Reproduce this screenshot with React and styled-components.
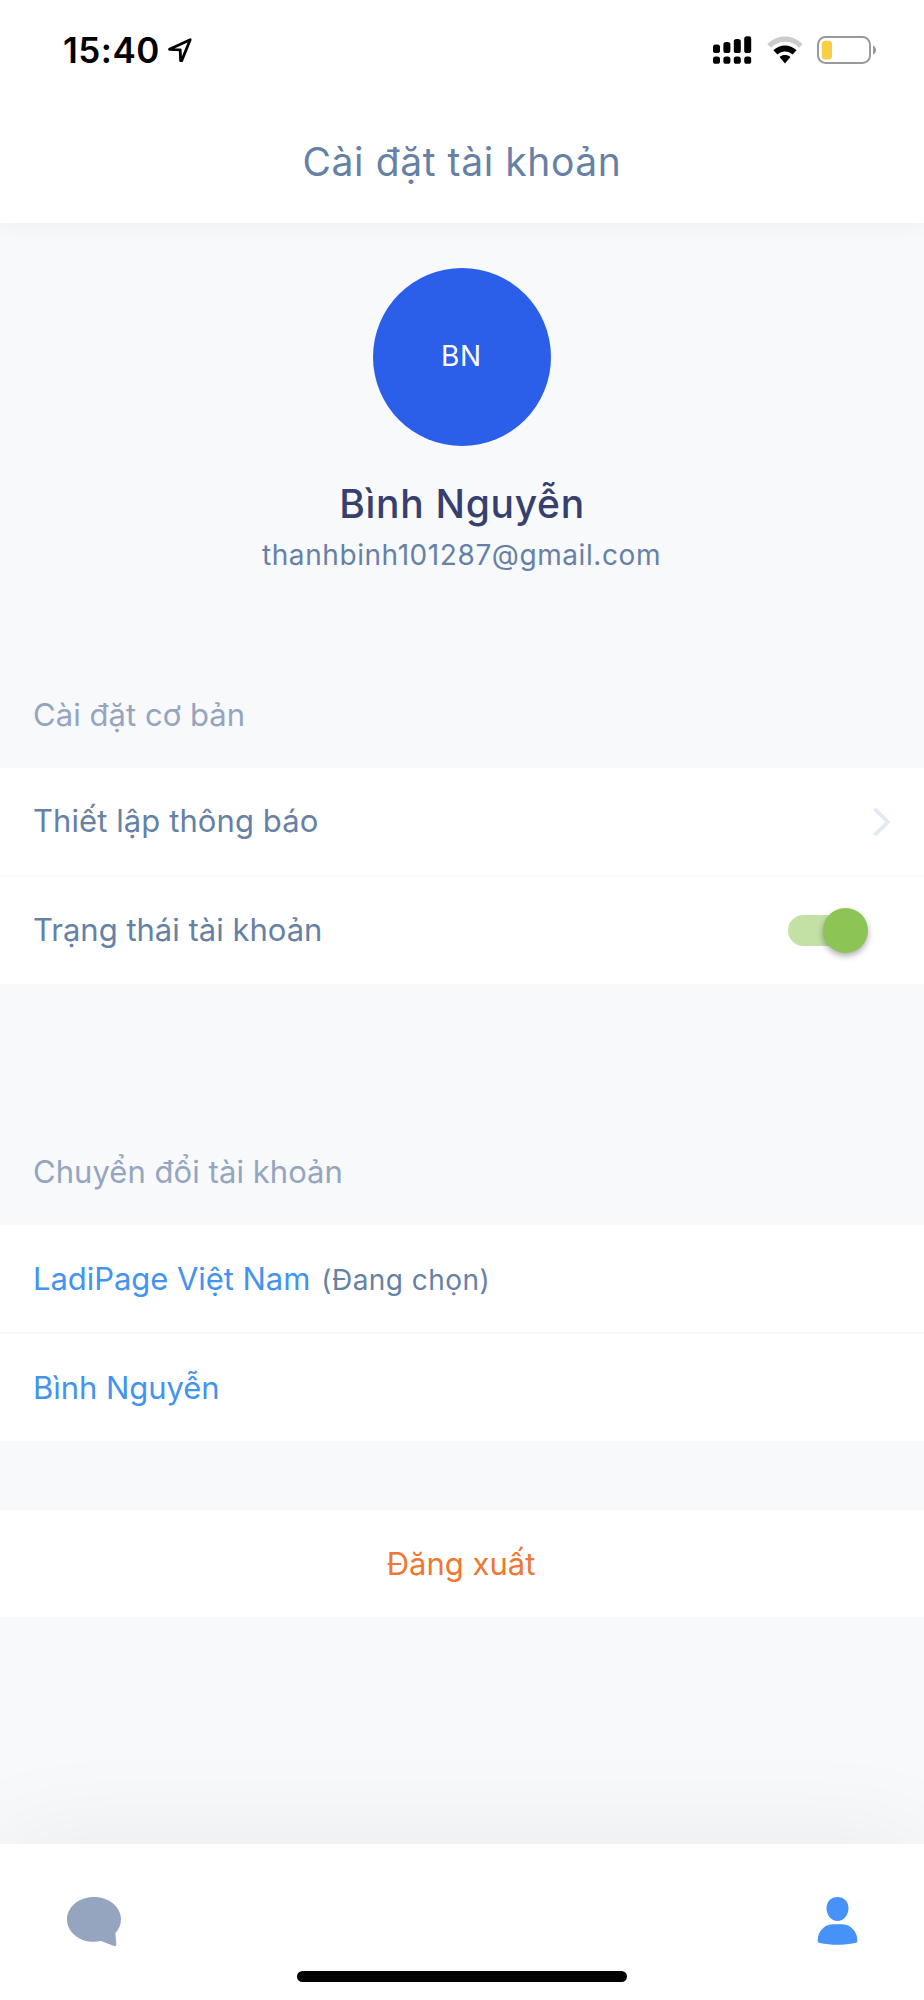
import React, { useState } from "react";

import styled, { createGlobalStyle } from "styled-components";

const GlobalStyle = createGlobalStyle`
  :root {
    --slate:#6681a5;
    --muted:#95a5bf;
    --navy:#363f6e;
    --blue:#4493ee;
    --orange:#ee7733;
    --background:#f8f9fb;
  }

  * {
    box-sizing:border-box;
  }

  body {
    margin:0;
    background:var(--background);
    font-family:Inter, "Noto Sans", sans-serif;
    font-size:31px;
  }

  h1, h2, p {
    margin:0;
    font-weight:400;
  }

  svg {
    display:block;
  }
`

const ScreenStyles = styled.div`
  width:924px;
  height:2000px;
  display:flex;
  flex-direction:column;
  overflow:hidden;
  background:var(--background);
`

const HeaderStyles = styled.header`
  flex:none;
  height:223px;
  background:#fff;
  box-shadow:0 0 22px rgba(0, 0, 0, 0.06);
`

const StatusBar = styled.div`
  height:100px;
  padding:0 47px 0 63px;
  display:flex;
  align-items:center;
  justify-content:space-between;
  color:#000;
`

const StatusGroup = styled.div`
  display:flex;
  align-items:center;
`

const Clock = styled.span`
  width:104px;
  font-size:35px;
  font-weight:600;
  letter-spacing:0.5px;
`

const SignalIcon = styled.svg`
  margin-right:15px;
`

const WifiIcon = styled.svg`
  margin-right:14px;
`

const Title = styled.h1`
  height:123px;
  line-height:123px;
  text-align:center;
  font-size:39px;
  letter-spacing:0.6px;
  color:var(--slate);
`

const Profile = styled.section`
  padding-top:45px;
  display:flex;
  flex-direction:column;
  align-items:center;
`

const Avatar = styled.div`
  width:178px;
  height:178px;
  padding:0 1px 3px 0;
  display:flex;
  align-items:center;
  justify-content:center;
  border-radius:50%;
  background:#2b5fe9;
  color:#fff;
  font-size:28px;
  letter-spacing:0.7px;
`

const Name = styled.h2`
  margin-top:33px;
  line-height:50px;
  font-size:39px;
  font-weight:500;
  letter-spacing:0.7px;
  color:var(--navy);
`

const Email = styled.p`
  margin-top:8px;
  padding-right:1px;
  line-height:36px;
  font-size:28px;
  letter-spacing:0.58px;
  color:var(--slate);
`

const SectionLabel = styled.h2`
  margin-top:${({ $gap }) => $gap}px;
  padding:0 33px 33px;
  line-height:40px;
  font-size:31px;
  letter-spacing:0.05px;
  color:var(--muted);
`

const List = styled.div`
  display:flex;
  flex-direction:column;
  gap:2px;
`

const Row = styled.div`
  height:107px;
  padding:0 ${({ $right }) => $right || 33}px 0 33px;
  display:flex;
  align-items:center;
  justify-content:space-between;
  background:#fff;
  color:var(--slate);
`

const RowText = styled.span`
  padding-bottom:2px;
  letter-spacing:${({ $spacing }) => $spacing || 0}px;
`

const AccountRow = styled(Row)`
  justify-content:flex-start;
  align-items:baseline;
  line-height:107px;
  letter-spacing:-0.05px;
  color:var(--blue);
`

const Selected = styled.span`
  margin-left:11px;
  font-size:28px;
  letter-spacing:0.45px;
  color:var(--slate);
`

const Switch = styled.button`
  width:80px;
  height:45px;
  padding:0;
  display:flex;
  align-items:center;
  border:none;
  background:none;
`

const Track = styled.span`
  flex:none;
  width:72px;
  height:31px;
  border-radius:16px;
  background:${({ $on }) => ($on ? "#c3e1a5" : "#ccc")};
`

const Thumb = styled.span`
  flex:none;
  width:45px;
  height:45px;
  margin-left:${({ $on }) => ($on ? -37 : -80)}px;
  border-radius:50%;
  background:${({ $on }) => ($on ? "#8cc555" : "#fafafa")};
  box-shadow:0 3px 6px rgba(0, 0, 0, 0.32);
`

const Logout = styled.button`
  height:107px;
  margin-top:69px;
  padding:0 2px 1px 0;
  border:none;
  background:#fff;
  font:inherit;
  color:var(--orange);
`

const TabBar = styled.nav`
  flex:none;
  height:156px;
  margin-top:auto;
  padding-top:53px;
  display:flex;
  flex-direction:column;
  justify-content:space-between;
  background:#fff;
  box-shadow:0 0 110px rgba(0, 0, 0, 0.065);
`

const Tabs = styled.div`
  padding:0 66px 0 67px;
  display:flex;
  justify-content:space-between;
`

const HomeIndicator = styled.div`
  width:330px;
  height:11px;
  margin:0 auto 18px;
  border-radius:6px;
  background:#000;
`

const signalBars = [[0, 8.5, 8.5], [10.4, 6, 11], [20.8, 3, 14], [31.2, 0.3, 16.7]]

export default function App(){
  const [isActive, setIsActive] = useState(true)

  return (
    <ScreenStyles>
      <GlobalStyle />
      <HeaderStyles>
        <StatusBar>
          <StatusGroup>
            <Clock>15:40</Clock>
            <svg width="26" height="26" viewBox="0 0 26 26" fill="none" stroke="#000" strokeWidth="2.8" strokeLinejoin="round">
              <path d="M2.5 12.3L23.2 2.7L14.7 23.6H13.6L13.2 12.8Z" />
            </svg>
          </StatusGroup>
          <StatusGroup>
            <SignalIcon width="39" height="28" viewBox="0 0 39 28">
              {signalBars.map(([x, y, height]) => (
                <g key={x}>
                  <rect x={x} y={y} width="7" height={height} rx="2.6" />
                  <rect x={x} y="20.4" width="7" height="7.4" rx="2.6" />
                </g>
              ))}
            </SignalIcon>
            <WifiIcon width="36" height="28" viewBox="0 0 36 28">
              <path d="M0.3 8.1C10.2 -2.2 25.8 -2.2 35.7 8.1L32 11.7C24.2 3.9 11.8 3.9 4 11.7Z" fill="#cbcbcb" />
              <path d="M6.4 14.3C12.9 7.9 23.1 7.9 29.6 14.3L25.6 18.4C21.2 14.4 14.8 14.4 10.4 18.4Z" />
              <path d="M12.6 21C15.7 18.4 20.3 18.4 23.4 21L18 27.4Z" />
            </WifiIcon>
            <svg width="60" height="28" viewBox="0 0 60 28">
              <rect x="1" y="1" width="52" height="26" rx="7.5" fill="none" stroke="#999" strokeWidth="2" />
              <rect x="4.8" y="4.8" width="10.2" height="18.8" rx="3.6" fill="#f7ce46" />
              <path d="M56 9.5Q59 11 59 14T56 18.5Z" fill="#999" />
            </svg>
          </StatusGroup>
        </StatusBar>
        <Title>Cài đặt tài khoản</Title>
      </HeaderStyles>
      <Profile>
        <Avatar>BN</Avatar>
        <Name>Bình Nguyễn</Name>
        <Email>thanhbinh101287@gmail.com</Email>
      </Profile>
      <SectionLabel $gap={122}>Cài đặt cơ bản</SectionLabel>
      <List>
        <Row>
          <RowText $spacing={0.08}>Thiết lập thông báo</RowText>
          <svg width="18" height="30" viewBox="0 0 18 30" fill="none" stroke="#e2eaf5" strokeWidth="3.8">
            <path d="M1.5 1.8L15 15L1.5 28.2" />
          </svg>
        </Row>
        <Row $right={56}>
          <RowText>Trạng thái tài khoản</RowText>
          <Switch type="button" role="switch" aria-checked={isActive} onClick={() => setIsActive(!isActive)}>
            <Track $on={isActive} />
            <Thumb $on={isActive} />
          </Switch>
        </Row>
      </List>
      <SectionLabel $gap={168}>Chuyển đổi tài khoản</SectionLabel>
      <List>
        <AccountRow>
          LadiPage Việt Nam
          <Selected>(Đang chọn)</Selected>
        </AccountRow>
        <AccountRow>Bình Nguyễn</AccountRow>
      </List>
      <Logout type="button">Đăng xuất</Logout>
      <TabBar>
        <Tabs>
          <svg width="54" height="50" viewBox="0 0 54 50" fill="#95a5bf">
            <path d="M27 0C42 0 54 10 54 22.4C54 27.5 52 32 48.4 36L49.3 47.2C49.4 48.8 48.5 49.5 47 49L34 44.1C31.8 44.6 29.4 44.8 27 44.8C12 44.8 0 34.8 0 22.4S12 0 27 0Z" />
          </svg>
          <svg width="41" height="50" viewBox="0 0 41 50" fill="#4692f8">
            <path d="M20.5 0C27 0 31.5 4.8 31.5 11.2C31.5 18 26.8 24 20.5 24S9.5 18 9.5 11.2C9.5 4.8 14 0 20.5 0Z" />
            <path d="M16.5 27.3H24.5C34 27.3 40.3 35 40.3 43.2C40.3 45 39.8 45.6 38 46C27 48.4 14 48.4 3 46C1.2 45.6 0.7 45 0.7 43.2C0.7 35 7 27.3 16.5 27.3Z" />
          </svg>
        </Tabs>
        <HomeIndicator />
      </TabBar>
    </ScreenStyles>
  )
}
